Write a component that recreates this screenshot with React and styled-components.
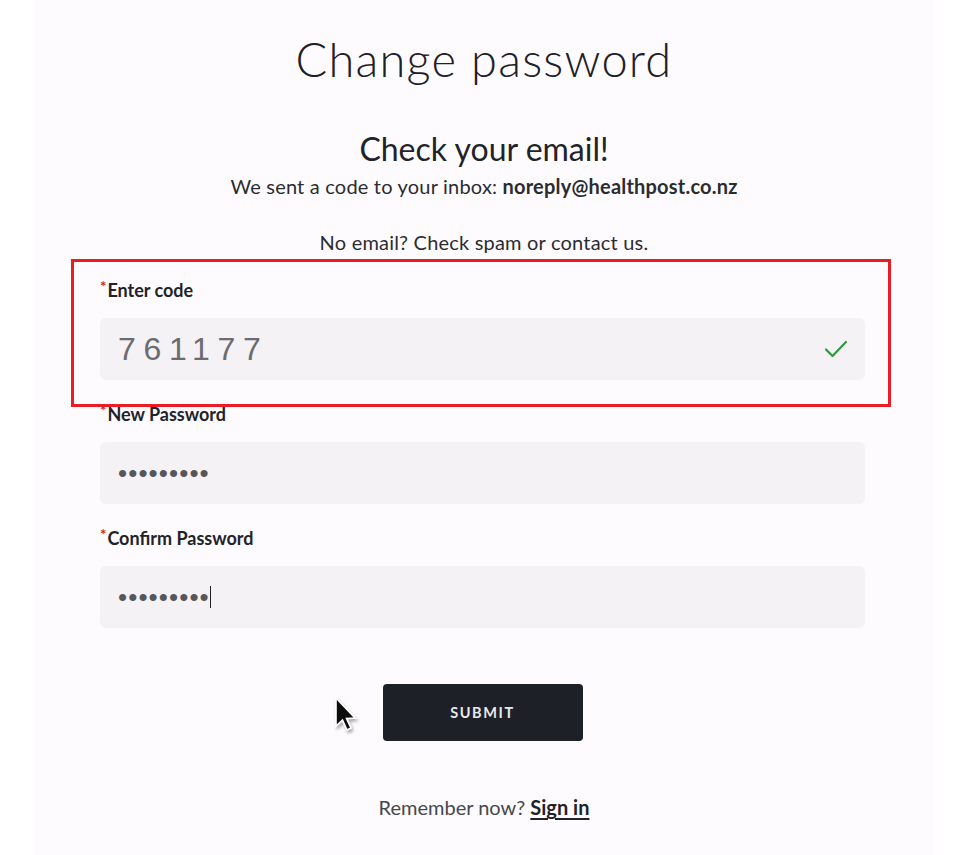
import React from 'react'
import styled, { createGlobalStyle } from 'styled-components'

const GlobalStyle = createGlobalStyle`
    html, body {
        margin: 0;
        padding: 0;
        background: #ffffff;
    }
    body {
        font-family: Lato, "Open Sans", "Liberation Sans", sans-serif;
        color: #222329;
    }
`

export const Page = styled.div`
    width: 968px;
    height: 855px;
    overflow: hidden;
    display: flex;
    justify-content: center;
`
export const Panel = styled.div`
    width: 900px;
    min-height: 855px;
    background: #fdfbfd;
    display: flex;
    flex-direction: column;
    align-items: center;
    box-sizing: border-box;
    padding-top: 28px;
`
export const Title = styled.h1`
    margin: 0;
    font-family: Lato, sans-serif;
    font-weight: 300;
    font-size: 47px;
    letter-spacing: 1.2px;
    color: #1f2026;
    line-height: 62px;
`
export const SubTitle = styled.h2`
    margin: 41px 0 0 0;
    font-weight: 400;
    font-size: 32px;
    line-height: 36px;
    color: #222329;
`
export const Note = styled.p`
    margin: ${props => props.gap || 0}px 0 0 0;
    font-size: 20px;
    letter-spacing: 0.2px;
    line-height: 24px;
    color: #2b2c31;
    b {
        font-weight: 700;
    }
`
export const Form = styled.form`
    width: 765px;
    margin: 22px 3px 0 0;
    display: flex;
    flex-direction: column;
`
export const Field = styled.div`
    position: relative;
    display: flex;
    flex-direction: column;
    margin-bottom: ${props => props.last ? 0 : 20}px;
    &::after {
        content: '';
        display: ${props => props.highlight ? 'block' : 'none'};
        position: absolute;
        left: -29px;
        right: -26px;
        top: -17px;
        bottom: -27px;
        border: 3px solid #ec1c24;
        pointer-events: none;
    }
`
export const Label = styled.label`
    padding-top: 3px;
    font-size: 18px;
    font-weight: 700;
    line-height: 22px;
    color: #222329;
    margin-bottom: 17px;
    span {
        color: #d8202e;
        font-size: 15px;
        line-height: 0;
        vertical-align: 5px;
        margin-right: 1px;
    }
`
export const InputBox = styled.div`
    height: 62px;
    background: #f4f2f4;
    border-radius: 6px;
    display: flex;
    align-items: center;
    padding: 0 17px 0 18px;
    box-sizing: border-box;
`
export const Value = styled.div`
    flex: 1;
    font-family: "Liberation Sans", sans-serif;
    font-size: ${props => props.code ? 32 : 26}px;
    letter-spacing: ${props => props.code ? '7.7px' : '1.1px'};
    color: ${props => props.code ? '#6b6b70' : '#56565b'};
    display: flex;
    align-items: center;
`
export const Caret = styled.i`
    display: inline-block;
    width: 1px;
    height: 22px;
    background: #222;
    margin-left: 0;
`
export const Actions = styled.div`
    margin-top: 56px;
    display: flex;
    justify-content: center;
    position: relative;
`
export const SubmitButton = styled.button`
    width: 200px;
    height: 57px;
    background: #1e2028;
    color: #e9e9ec;
    border: none;
    border-radius: 4px;
    font-family: Lato, sans-serif;
    font-weight: 700;
    font-size: 14.5px;
    letter-spacing: 1.6px;
`
export const Pointer = styled.svg`
    position: absolute;
    left: 232px;
    top: 10px;
`
export const Footer = styled.p`
    margin: 54px 0 0 0;
    font-size: 20px;
    color: #46474c;
    a {
        color: #222329;
        font-weight: 700;
        text-decoration: underline;
        text-underline-offset: 3px;
    }
`

const Check = () => (
    <svg width="24" height="20" viewBox="0 0 24 20">
        <path d="M2 10.5 L8.5 17 L22 3" fill="none" stroke="#2e9a3e" strokeWidth="2.2" strokeLinecap="round" strokeLinejoin="round" />
    </svg>
)

const Dots = ({ count }) => '\u2022'.repeat(count)

export default function App() {
    return (
        <Page>
            <GlobalStyle />
            <Panel>
                <Title>Change password</Title>
                <SubTitle>Check your email!</SubTitle>
                <Note gap={7}>We sent a code to your inbox: <b>noreply@healthpost.co.nz</b></Note>
                <Note gap={32}>No email? Check spam or contact us.</Note>
                <Form onSubmit={e => e.preventDefault()}>
                    <Field highlight>
                        <Label><span>*</span>Enter code</Label>
                        <InputBox>
                            <Value code>761177</Value>
                            <Check />
                        </InputBox>
                    </Field>
                    <Field>
                        <Label><span>*</span>New Password</Label>
                        <InputBox>
                            <Value><Dots count={9} /></Value>
                        </InputBox>
                    </Field>
                    <Field last>
                        <Label><span>*</span>Confirm Password</Label>
                        <InputBox>
                            <Value><Dots count={9} /><Caret /></Value>
                        </InputBox>
                    </Field>
                    <Actions>
                        <Pointer width="30" height="46" viewBox="0 0 30 46">
                            <defs>
                                <filter id="sh" x="-50%" y="-50%" width="200%" height="200%">
                                    <feDropShadow dx="1.5" dy="2.5" stdDeviation="1.8" floodColor="#000" floodOpacity="0.35" />
                                </filter>
                            </defs>
                            <path d="M4 4 L4 32 L10.5 26 L15 36 L19 34 L14.5 24.5 L23 24 Z" fill="#111" stroke="#fff" strokeWidth="1.6" filter="url(#sh)" />
                        </Pointer>
                        <SubmitButton type="submit">SUBMIT</SubmitButton>
                    </Actions>
                </Form>
                <Footer>Remember now? <a href="#">Sign in</a></Footer>
            </Panel>
        </Page>
    )
}
